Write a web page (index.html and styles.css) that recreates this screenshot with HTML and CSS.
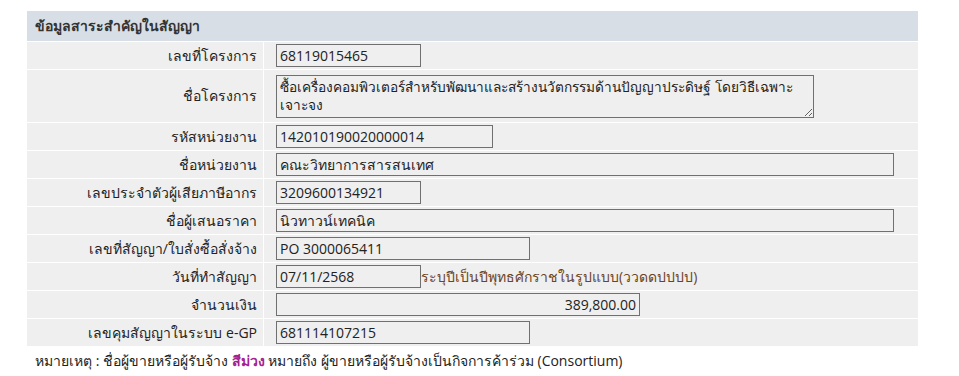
FILE: index.html
```html
<!DOCTYPE html>
<html lang="th">
<head>
  <meta charset="UTF-8">
  <title>ข้อมูลสาระสำคัญในสัญญา</title>
  <link rel="stylesheet" href="styles.css">
</head>
<body>
  <table class="contract">
    <tr>
      <th colspan="2" class="head">ข้อมูลสาระสำคัญในสัญญา</th>
    </tr>
    <tr>
      <td class="label">เลขที่โครงการ</td>
      <td class="value"><input type="text" class="w-sm" value="68119015465" readonly></td>
    </tr>
    <tr class="tall">
      <td class="label">ชื่อโครงการ</td>
      <td class="value"><textarea readonly>ซื้อเครื่องคอมพิวเตอร์สำหรับพัฒนาและสร้างนวัตกรรมด้านปัญญาประดิษฐ์ โดยวิธีเฉพาะ&#8203;เจาะจง</textarea></td>
    </tr>
    <tr>
      <td class="label">รหัสหน่วยงาน</td>
      <td class="value"><input type="text" class="w-md" value="142010190020000014" readonly></td>
    </tr>
    <tr>
      <td class="label">ชื่อหน่วยงาน</td>
      <td class="value"><input type="text" class="w-xl" value="คณะวิทยาการสารสนเทศ" readonly></td>
    </tr>
    <tr>
      <td class="label">เลขประจำตัวผู้เสียภาษีอากร</td>
      <td class="value"><input type="text" class="w-sm" value="3209600134921" readonly></td>
    </tr>
    <tr>
      <td class="label">ชื่อผู้เสนอราคา</td>
      <td class="value"><input type="text" class="w-xl" value="นิวทาวน์เทคนิค" readonly></td>
    </tr>
    <tr>
      <td class="label">เลขที่สัญญา/ใบสั่งซื้อสั่งจ้าง</td>
      <td class="value"><input type="text" class="w-lg" value="PO 3000065411" readonly></td>
    </tr>
    <tr>
      <td class="label">วันที่ทำสัญญา</td>
      <td class="value"><input type="text" class="w-sm" value="07/11/2568" readonly><span class="hint">ระบุปีเป็นปีพุทธศักราชในรูปแบบ(ววดดปปปป)</span></td>
    </tr>
    <tr>
      <td class="label">จำนวนเงิน</td>
      <td class="value"><input type="text" class="w-amount" value="389,800.00" readonly></td>
    </tr>
    <tr>
      <td class="label">เลขคุมสัญญาในระบบ e-GP</td>
      <td class="value"><input type="text" class="w-lg" value="681114107215" readonly></td>
    </tr>
  </table>

  <div class="note">
    หมายเหตุ : ชื่อผู้ขายหรือผู้รับจ้าง <span class="purple">สีม่วง</span> หมายถึง ผู้ขายหรือผู้รับจ้างเป็นกิจการค้าร่วม (Consortium)
  </div>
</body>
</html>
```

FILE: styles.css
```css
body {
  margin: 8px;
  font-family: "Open Sans", Tahoma, sans-serif;
  font-size: 14px;
  color: #222;
  background: #fff;
}

.contract {
  margin-left: 18px;
  margin-top: 2px;
  width: 893px;
  border-collapse: separate;
  border-spacing: 1px;
}

.head {
  background: #d7dee5;
  color: #333;
  text-align: left;
  font-weight: bold;
  height: 30px;
  padding: 0 8px;
}

td {
  background: #efefef;
  padding: 2px 0;
  height: 23px;
  line-height: 18px;
}

.label {
  width: 230px;
  text-align: right;
  padding-right: 6px;
}

.value {
  padding-left: 12px;
}

input,
textarea {
  font-family: inherit;
  font-size: 14px;
  color: #222;
  background: #efefef;
  border: 1px solid #707070;
  box-sizing: border-box;
  height: 23px;
  padding: 0 3px;
  margin: 0;
  vertical-align: middle;
  outline: none;
}

.tall td {
  height: 48px;
}

textarea {
  display: block;
  width: 538px;
  height: 43px;
  padding: 2px 1px 2px 3px;
  font-size: 13.7px;
  resize: both;
  line-height: 18px;
  overflow: hidden;
}

.w-sm { width: 145px; }
.w-md { width: 217px; }
.w-lg { width: 254px; }
.w-xl { width: 618px; }
.w-amount { width: 364px; text-align: right; }

.hint {
  color: #6b4423;
  vertical-align: middle;
}

.note {
  margin: 3px 0 0 27px;
}

.purple {
  color: #a3228f;
  font-weight: bold;
}
```
